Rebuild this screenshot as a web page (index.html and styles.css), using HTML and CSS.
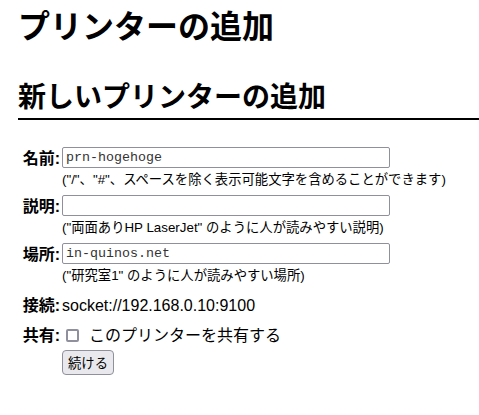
FILE: index.html
```html
<!DOCTYPE html>
<html lang="ja">
<head>
<meta charset="utf-8">
<title>プリンターの追加</title>
<link rel="stylesheet" href="styles.css">
</head>
<body>
<h1 class="title">プリンターの追加</h1>
<h2 class="section">新しいプリンターの追加</h2>
<form class="printer-form">
  <label class="lbl" for="pname">名前:</label>
  <div class="field">
    <input class="text" id="pname" type="text" value="prn-hogehoge">
    <div class="help">("/"、"#"、スペースを除く表示可能文字を含めることができます)</div>
  </div>

  <label class="lbl" for="pdesc">説明:</label>
  <div class="field">
    <input class="text" id="pdesc" type="text" value="">
    <div class="help">("両面ありHP LaserJet" のように人が読みやすい説明)</div>
  </div>

  <label class="lbl" for="ploc">場所:</label>
  <div class="field">
    <input class="text" id="ploc" type="text" value="in-quinos.net">
    <div class="help">("研究室1" のように人が読みやすい場所)</div>
  </div>

  <span class="lbl conn">接続:</span>
  <div class="field plain conn">socket://192.168.0.10:9100</div>

  <span class="lbl share">共有:</span>
  <div class="field plain share">
    <label class="check"><input class="box" type="checkbox"> このプリンターを共有する</label>
  </div>

  <span class="lbl submit"></span>
  <div class="field submit">
    <button class="btn" type="button">続ける</button>
  </div>
</form>
</body>
</html>
```

FILE: styles.css
```css
html, body {
  background: #ffffff;
}
body {
  margin: 0;
  padding: 0 0 0 18px;
  color: #000000;
  font-family: "Liberation Sans", "Noto Sans CJK JP", sans-serif;
  font-size: 16px;
}
.title {
  margin: 4px 0 0;
  font-size: 32px;
  line-height: 46px;
  font-weight: bold;
}
.section {
  margin: 28px 0 0;
  font-size: 28px;
  line-height: 40px;
  font-weight: bold;
  border-bottom: 2px solid #000000;
}
.printer-form {
  margin-top: 27px;
  display: grid;
  grid-template-columns: 42px 1fr;
  column-gap: 2px;
  row-gap: 6px;
  align-items: start;
}
.lbl {
  text-align: right;
  font-weight: bold;
  font-size: 16px;
  line-height: 23px;
  white-space: nowrap;
}
.field {
  display: flex;
  flex-direction: column;
  align-items: flex-start;
}
.plain {
  line-height: 23px;
}
.conn {
  margin-top: 3px;
}
.share {
  margin-top: 1px;
}
.submit {
  margin-top: -3px;
}
.text {
  box-sizing: border-box;
  width: 328px;
  height: 21px;
  margin: 0;
  padding: 0 3px;
  border: 1px solid #8f8f9d;
  border-radius: 2px;
  font-family: "Liberation Mono", monospace;
  font-size: 13.33px;
  color: #333333;
  background: #ffffff;
}
.help {
  margin-top: 2px;
  font-size: 13.33px;
  line-height: 19px;
}
.check {
  display: flex;
  align-items: center;
  gap: 7px;
}
.box {
  appearance: none;
  box-sizing: border-box;
  width: 13px;
  height: 13px;
  margin: 3px 3px 3px 4px;
  border: 2px solid #8f8f9d;
  border-radius: 2px;
  background: #ffffff;
}
.btn {
  box-sizing: border-box;
  height: 25px;
  margin: 0;
  padding: 0 5px;
  border: 1px solid #8f8f9d;
  border-radius: 4px;
  background: #e9e9ed;
  color: #000000;
  font-family: "Liberation Sans", "Noto Sans CJK JP", sans-serif;
  font-size: 13.33px;
}
```
